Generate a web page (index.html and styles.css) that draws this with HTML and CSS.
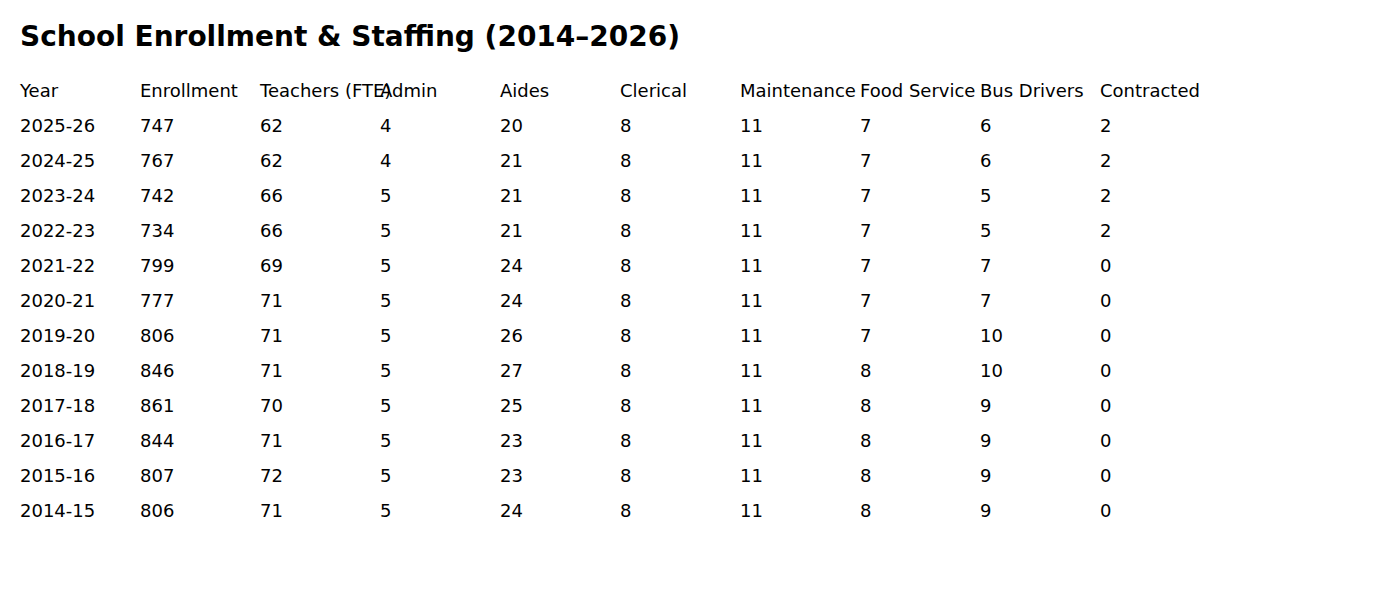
FILE: index.html
```html
<!DOCTYPE html>
<html>
<head>
<meta charset="utf-8">
<link rel="stylesheet" href="styles.css">
</head>
<body>
<div class="page">
<h1 class="title">School Enrollment &amp; Staffing (2014–2026)</h1>
<div class="table">
<div class="cell">Year</div><div class="cell">Enrollment</div><div class="cell">Teachers (FTE)</div><div class="cell">Admin</div><div class="cell">Aides</div><div class="cell">Clerical</div><div class="cell">Maintenance</div><div class="cell">Food Service</div><div class="cell">Bus Drivers</div><div class="cell">Contracted</div>
<div class="cell">2025-26</div><div class="cell">747</div><div class="cell">62</div><div class="cell">4</div><div class="cell">20</div><div class="cell">8</div><div class="cell">11</div><div class="cell">7</div><div class="cell">6</div><div class="cell">2</div>
<div class="cell">2024-25</div><div class="cell">767</div><div class="cell">62</div><div class="cell">4</div><div class="cell">21</div><div class="cell">8</div><div class="cell">11</div><div class="cell">7</div><div class="cell">6</div><div class="cell">2</div>
<div class="cell">2023-24</div><div class="cell">742</div><div class="cell">66</div><div class="cell">5</div><div class="cell">21</div><div class="cell">8</div><div class="cell">11</div><div class="cell">7</div><div class="cell">5</div><div class="cell">2</div>
<div class="cell">2022-23</div><div class="cell">734</div><div class="cell">66</div><div class="cell">5</div><div class="cell">21</div><div class="cell">8</div><div class="cell">11</div><div class="cell">7</div><div class="cell">5</div><div class="cell">2</div>
<div class="cell">2021-22</div><div class="cell">799</div><div class="cell">69</div><div class="cell">5</div><div class="cell">24</div><div class="cell">8</div><div class="cell">11</div><div class="cell">7</div><div class="cell">7</div><div class="cell">0</div>
<div class="cell">2020-21</div><div class="cell">777</div><div class="cell">71</div><div class="cell">5</div><div class="cell">24</div><div class="cell">8</div><div class="cell">11</div><div class="cell">7</div><div class="cell">7</div><div class="cell">0</div>
<div class="cell">2019-20</div><div class="cell">806</div><div class="cell">71</div><div class="cell">5</div><div class="cell">26</div><div class="cell">8</div><div class="cell">11</div><div class="cell">7</div><div class="cell">10</div><div class="cell">0</div>
<div class="cell">2018-19</div><div class="cell">846</div><div class="cell">71</div><div class="cell">5</div><div class="cell">27</div><div class="cell">8</div><div class="cell">11</div><div class="cell">8</div><div class="cell">10</div><div class="cell">0</div>
<div class="cell">2017-18</div><div class="cell">861</div><div class="cell">70</div><div class="cell">5</div><div class="cell">25</div><div class="cell">8</div><div class="cell">11</div><div class="cell">8</div><div class="cell">9</div><div class="cell">0</div>
<div class="cell">2016-17</div><div class="cell">844</div><div class="cell">71</div><div class="cell">5</div><div class="cell">23</div><div class="cell">8</div><div class="cell">11</div><div class="cell">8</div><div class="cell">9</div><div class="cell">0</div>
<div class="cell">2015-16</div><div class="cell">807</div><div class="cell">72</div><div class="cell">5</div><div class="cell">23</div><div class="cell">8</div><div class="cell">11</div><div class="cell">8</div><div class="cell">9</div><div class="cell">0</div>
<div class="cell">2014-15</div><div class="cell">806</div><div class="cell">71</div><div class="cell">5</div><div class="cell">24</div><div class="cell">8</div><div class="cell">11</div><div class="cell">8</div><div class="cell">9</div><div class="cell">0</div>
</div>
</div>
</body>
</html>
```
FILE: styles.css
```css
html, body {
  margin: 0;
  padding: 0;
  background: #fff;
}
body {
  font-family: "DejaVu Sans", sans-serif;
  color: #000;
}
.page {
  padding: 20px;
}
.title {
  margin: 0 0 28px 0;
  font-size: 28px;
  font-weight: bold;
  line-height: 34px;
}
.table {
  display: grid;
  grid-template-columns: repeat(10, 120px);
  grid-auto-rows: 35px;
  font-size: 18px;
}
.cell {
  white-space: nowrap;
  line-height: 18px;
}
```
